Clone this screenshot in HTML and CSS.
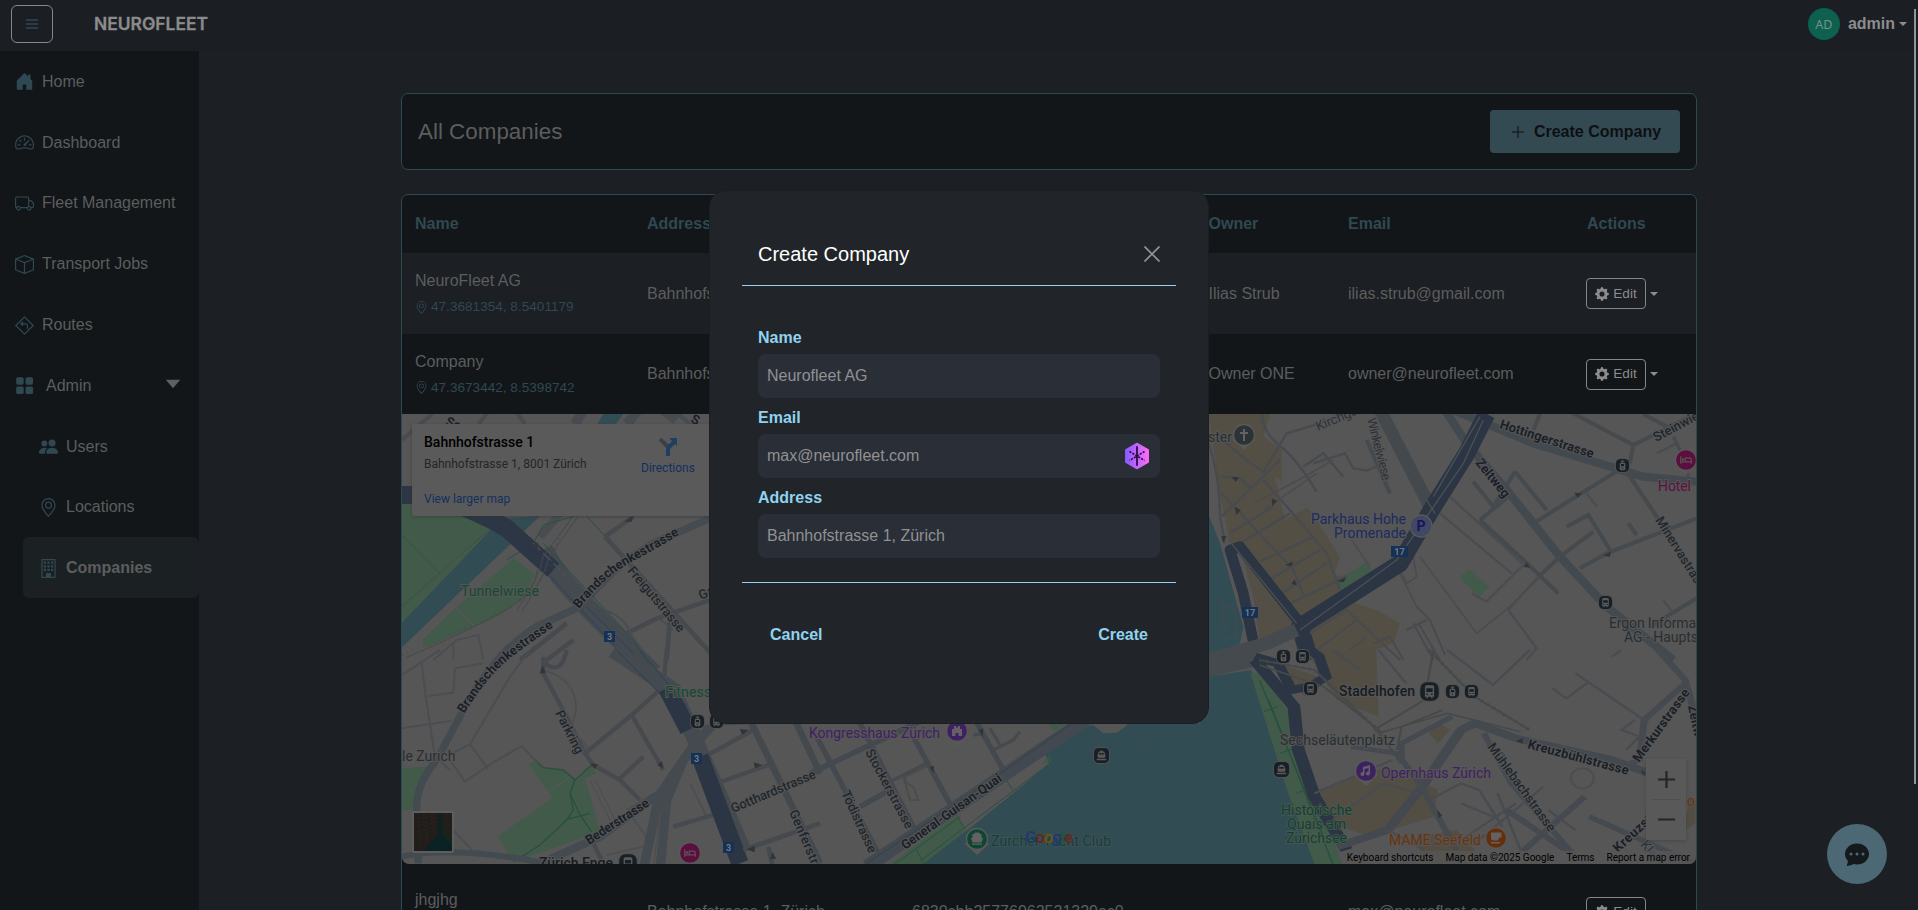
FILE: index.html
```html
<!DOCTYPE html>
<html lang="en">
<head>
<meta charset="utf-8">
<title>Neurofleet – Companies</title>
<link rel="stylesheet" href="styles.css">
</head>
<body>
<svg class="sprite" aria-hidden="true">
  <symbol id="geo" viewBox="0 0 16 16"><path d="M12.166 8.94c-.524 1.062-1.234 2.12-1.96 3.07A32 32 0 0 1 8 14.58a32 32 0 0 1-2.206-2.57c-.726-.95-1.436-2.008-1.96-3.07C3.304 7.867 3 6.862 3 6a5 5 0 0 1 10 0c0 .862-.305 1.867-.834 2.94M8 16s6-5.686 6-10A6 6 0 0 0 2 6c0 4.314 6 10 6 10"/><path d="M8 8a2 2 0 1 1 0-4 2 2 0 0 1 0 4m0 1a3 3 0 1 0 0-6 3 3 0 0 0 0 6"/></symbol>
  <symbol id="gear" viewBox="0 0 16 16"><path d="M9.405 1.05c-.413-1.4-2.397-1.4-2.81 0l-.1.34a1.464 1.464 0 0 1-2.105.872l-.31-.17c-1.283-.698-2.686.705-1.987 1.987l.169.311c.446.82.023 1.841-.872 2.105l-.34.1c-1.4.413-1.4 2.397 0 2.81l.34.1a1.464 1.464 0 0 1 .872 2.105l-.17.31c-.698 1.283.705 2.686 1.987 1.987l.311-.169a1.464 1.464 0 0 1 2.105.872l.1.34c.413 1.4 2.397 1.4 2.81 0l.1-.34a1.464 1.464 0 0 1 2.105-.872l.31.17c1.283.698 2.686-.705 1.987-1.987l-.169-.311a1.464 1.464 0 0 1 .872-2.105l.34-.1c1.4-.413 1.4-2.397 0-2.81l-.34-.1a1.464 1.464 0 0 1-.872-2.105l.17-.31c.698-1.283-.705-2.686-1.987-1.987l-.311.169a1.464 1.464 0 0 1-2.105-.872zM8 10.93a2.929 2.929 0 1 1 0-5.86 2.929 2.929 0 0 1 0 5.858z"/></symbol>
  <symbol id="tram" viewBox="0 0 16 16"><rect width="16" height="16" rx="6" fill="#4f5254"/><rect x="1" y="1" width="14" height="14" rx="5" fill="#182026"/><path d="M6 3.2h4M8 3.2v2" stroke="#595959" stroke-width="1.2"/><rect x="5" y="5" width="6" height="8" rx="1.3" fill="#595959"/><path d="M6.3 6.5h3.4v2.4H6.3zM7.3 10.3h1.4v1.2H7.3z" fill="#182026"/></symbol>
  <symbol id="bus" viewBox="0 0 16 16"><rect width="16" height="16" rx="6" fill="#4f5254"/><rect x="1" y="1" width="14" height="14" rx="5" fill="#182026"/><path d="M4.5 4.5q0-1.2 1.2-1.2h4.6q1.2 0 1.2 1.2V12h-1.2v1.1H9.2V12H6.8v1.1H5.7V12H4.5z" fill="#595959"/><path d="M5.6 5.5h4.8v2.8H5.6zM5.6 9.6h1.2v1H5.6zM9.2 9.6h1.2v1H9.2z" fill="#182026"/></symbol>
  <symbol id="ship" viewBox="0 0 18 18"><rect width="18" height="18" rx="6" fill="#4f5254"/><rect x="1" y="1" width="16" height="16" rx="5" fill="#182026"/><path d="M7 4h4v1.5h1.5V8l1 .5-1 3h-7l-1-3 1-.5V5.5H7zM4 12.5h10V14H4z" fill="#595959"/><path d="M6.5 6.5h5V8h-5z" fill="#182026"/></symbol>
  <symbol id="bed" viewBox="0 0 16 12"><path d="M1 1v10M1 8.5h14M15 11V5.5q0-2-2-2H7v5" fill="none" stroke="#5f5258" stroke-width="1.6"/><circle cx="4" cy="5.3" r="1.7" fill="#5f5258"/></symbol>
</svg>

<header class="topbar">
  <button class="burger" aria-label="Menu"><svg width="12" height="10" viewBox="0 0 12 10"><path d="M0 1h12M0 5h12M0 9h12" stroke="#2f4853" stroke-width="1.7"/></svg></button>
  <svg class="logo" width="116" height="20" viewBox="0 0 116 20"><text x="0" y="16" textLength="114" lengthAdjust="spacingAndGlyphs">NEUROFLEET</text><circle cx="56.5" cy="10" r="1.3" fill="#8b8c8d"/></svg>
  <div class="account"><span class="avatar">AD</span><b>admin</b><i class="caret"></i></div>
</header>

<div class="shell">
  <nav class="sidebar">
    <a><svg class="ic" viewBox="0 0 16 16"><path d="M6.5 14.5v-3.505c0-.245.25-.495.5-.495h2c.25 0 .5.25.5.5v3.5a.5.5 0 0 0 .5.5h4a.5.5 0 0 0 .5-.5v-7a.5.5 0 0 0-.146-.354L13 5.793V2.5a.5.5 0 0 0-.5-.5h-1a.5.5 0 0 0-.5.5v1.293L8.354 1.146a.5.5 0 0 0-.708 0l-6 6A.5.5 0 0 0 1.5 7.5v7a.5.5 0 0 0 .5.5h4a.5.5 0 0 0 .5-.5"/></svg>Home</a>
    <a><svg class="ic" viewBox="0 0 16 16"><path d="M8 4a.5.5 0 0 1 .5.5V6a.5.5 0 0 1-1 0V4.5A.5.5 0 0 1 8 4M3.732 5.732a.5.5 0 0 1 .707 0l.915.914a.5.5 0 1 1-.708.708l-.914-.915a.5.5 0 0 1 0-.707M2 10a.5.5 0 0 1 .5-.5h1.586a.5.5 0 0 1 0 1H2.5A.5.5 0 0 1 2 10m9.5 0a.5.5 0 0 1 .5-.5h1.5a.5.5 0 0 1 0 1H12a.5.5 0 0 1-.5-.5m.754-4.246a.39.39 0 0 0-.527-.02L7.547 9.31a.91.91 0 1 0 1.302 1.258l3.434-4.297a.39.39 0 0 0-.029-.518z"/><path fill-rule="evenodd" d="M0 10a8 8 0 1 1 15.547 2.661c-.442 1.253-1.845 1.602-2.932 1.25C11.309 13.488 9.475 13 8 13c-1.474 0-3.31.488-4.615.911-1.087.352-2.49.003-2.932-1.25A8 8 0 0 1 0 10m8-7a7 7 0 0 0-6.603 9.329c.203.575.923.876 1.68.63C4.397 12.533 6.358 12 8 12s3.604.532 4.923.96c.757.245 1.477-.056 1.68-.631A7 7 0 0 0 8 3"/></svg>Dashboard</a>
    <a><svg class="ic" viewBox="0 0 16 16"><path d="M0 3.5A1.5 1.5 0 0 1 1.5 2h9A1.5 1.5 0 0 1 12 3.5V5h1.02a1.5 1.5 0 0 1 1.17.563l1.481 1.85a1.5 1.5 0 0 1 .329.938V10.5a1.5 1.5 0 0 1-1.5 1.5H14a2 2 0 1 1-4 0H5a2 2 0 1 1-3.998-.085A1.5 1.5 0 0 1 0 10.5zm1.294 7.456A2 2 0 0 1 4.732 11h5.536a2 2 0 0 1 .732-.732V3.5a.5.5 0 0 0-.5-.5h-9a.5.5 0 0 0-.5.5v7a.5.5 0 0 0 .294.456M12 10a2 2 0 0 1 1.732 1h.768a.5.5 0 0 0 .5-.5V8.35a.5.5 0 0 0-.11-.312l-1.48-1.85A.5.5 0 0 0 13.02 6H12zm-9 1a1 1 0 1 0 0 2 1 1 0 0 0 0-2m9 0a1 1 0 1 0 0 2 1 1 0 0 0 0-2"/></svg>Fleet Management</a>
    <a><svg class="ic" viewBox="0 0 16 16"><path d="M8.186 1.113a.5.5 0 0 0-.372 0L1.846 3.5 8 5.961 14.154 3.5zM15 4.239l-6.5 2.6v7.922l6.5-2.6V4.24zM7.5 14.762V6.838L1 4.239v7.923zM7.443.184a1.5 1.5 0 0 1 1.114 0l7.129 2.852A.5.5 0 0 1 16 3.5v8.662a1 1 0 0 1-.629.928l-7.185 2.874a.5.5 0 0 1-.372 0L.63 13.09a1 1 0 0 1-.63-.928V3.5a.5.5 0 0 1 .314-.464z"/></svg>Transport Jobs</a>
    <a><svg class="ic" viewBox="0 0 16 16"><path d="M8 .7 15.3 8 8 15.3.7 8z" fill="none" stroke="currentColor" stroke-linejoin="round"/><path d="M5.5 6.6h3.3q1.7 0 1.7 1.7V11" fill="none" stroke="currentColor"/><path d="M6.7 4.3v4.6L4.2 6.6z"/></svg>Routes</a>
    <a class="parent"><svg class="ic" viewBox="0 0 16 16"><rect x="1" y="1" width="6.3" height="6.3" rx="1.4"/><rect x="8.9" y="1" width="6.3" height="6.3" rx="1.4"/><rect x="1" y="8.9" width="6.3" height="6.3" rx="1.4"/><rect x="8.9" y="8.9" width="6.3" height="6.3" rx="1.4"/></svg>Admin<svg class="chev" width="16" height="10" viewBox="0 0 16 10"><path d="M.8.8h14.4L8 9.2z"/></svg></a>
    <a class="sub"><svg class="ic" viewBox="0 0 16 16"><path d="M7 14s-1 0-1-1 1-4 5-4 5 3 5 4-1 1-1 1zm4-6a3 3 0 1 0 0-6 3 3 0 0 0 0 6m-5.784 6A2.24 2.24 0 0 1 5 13c0-1.355.68-2.75 1.936-3.72A6.3 6.3 0 0 0 5 9c-4 0-5 3-5 4s1 1 1 1zM4.5 8a2.5 2.5 0 1 0 0-5 2.5 2.5 0 0 0 0 5"/></svg>Users</a>
    <a class="sub"><svg class="ic"><use href="#geo"/></svg>Locations</a>
    <a class="sub active"><svg class="ic" viewBox="0 0 16 16"><path fill-rule="evenodd" d="M2.5 0h11q.5 0 .5.5v15q0 .5-.5.5h-11q-.5 0-.5-.5V.5q0-.5.5-.5M3 1v14h3v-2.5q0-.5.5-.5h3q.5 0 .5.5V15h3V1z"/><path d="M4 2.200h1.900v1.900H4zM7.050 2.200h1.900v1.900h-1.900zM10.100 2.200H12v1.900h-1.900zM4 5.200h1.900v1.900H4zM7.050 5.200h1.900v1.900h-1.900zM10.100 5.200H12v1.900h-1.900zM4 8.200h1.900v1.900H4zM7.050 8.200h1.900v1.900h-1.900zM10.100 8.200H12v1.900h-1.900zM6 12h4v3H6z"/></svg>Companies</a>
  </nav>

  <main class="content">
    <section class="card titlebar">
      <h1>All Companies</h1>
      <button class="primary"><svg width="12" height="12" viewBox="0 0 12 12"><path d="M6 0v12M0 6h12" stroke="currentColor" stroke-width="1"/></svg>Create Company</button>
    </section>
    <section class="card list">
      <div class="row head"><span>Name</span><span>Address</span><span>ID</span><span>Owner</span><span>Email</span><span>Actions</span></div>
      <div class="row alt">
        <div>NeuroFleet AG<small><svg><use href="#geo"/></svg>47.3681354, 8.5401179</small></div><span>Bahnhofstrasse 1, Zürich</span><span></span><span>Ilias Strub</span><span>ilias.strub@gmail.com</span>
        <div class="actions"><button><svg><use href="#gear"/></svg>Edit</button><i class="caret"></i></div>
      </div>
      <div class="row">
        <div>Company<small><svg><use href="#geo"/></svg>47.3673442, 8.5398742</small></div><span>Bahnhofstrasse 1, Zürich</span><span></span><span>Owner ONE</span><span>owner@neurofleet.com</span>
        <div class="actions"><button><svg><use href="#gear"/></svg>Edit</button><i class="caret"></i></div>
      </div>
      <div class="mapbox">
      <svg class="map" width="1294" height="450" viewBox="402 414 1294 450">
        <defs>
          <path id="brand1" d="M579 609Q604 577 630 563T683 532"/>
          <path id="brand2" d="M464 714Q484 682 500 667T552 628"/>
        </defs>
        <rect x="402" y="414" width="1294" height="450" fill="#565656"/>
        <!-- north-west quarter -->
        <g transform="translate(400 410) scale(.33333)" fill="none">
          <path d="M6 280 200 318 285 342 6 638z" fill="#425a49"/>
          <path d="M6 375 118 490M118 490 6 590M118 490 285 345" stroke="#2f5143" stroke-width="2"/>
          <path d="M6 638 305 325 420 318 6 712zM592 42 610 12h60l-22 30z" fill="#324c53"/>
          <path d="M68 690 170 590 342 444 405 495 370 560Q300 625 220 650L75 712z" fill="#425a49"/>
          <path d="M168 592l55 55" stroke="#565656" stroke-width="5"/>
          <path d="M6 90 110 0M235 42l35-42M345 0l30 42M820 0l60 50" stroke="#484c50" stroke-width="12"/>
          <path d="M525 42 550 0M680 42 715 0M790 0l40 30" stroke="#484c50" stroke-width="30"/>
          <path d="M300 740Q380 660 430 640L540 590Q620 500 680 450L760 400 930 325" stroke="#444b51" stroke-width="22"/>
          <path d="M420 380 490 300" stroke="#484d51" stroke-width="24"/>
          <path d="M430 420 480 500 560 590 760 790" stroke="#444a50" stroke-width="58"/>
          <path d="M400 445 600 660 770 840M560 590 690 720 780 830" stroke="#29405a" stroke-width="3"/>
          <path d="M430 400 700 690 800 850M320 450 400 400 430 345 520 320M560 318 620 385" stroke="#27503d" stroke-width="3"/>
          <path d="M6 255h80Q230 300 320 355L460 480" stroke="#2c3644" stroke-width="54"/>
          <path d="m400 400 100 100" stroke="#4b5157" stroke-width="4" stroke-dasharray="30 12"/>
          <path d="M350 600Q420 500 430 440L520 318M365 606Q435 500 445 445L535 318M20 742Q190 670 300 610T410 480" stroke="#44484b" stroke-width="3"/>
          <path d="M6 735Q190 665 315 600T480 370" stroke="#48494a" stroke-width="7" stroke-dasharray="2 15"/>
          <path d="M615 380 700 320M615 380 960 760M680 670 770 625 960 560M810 625 800 750M500 640 360 750M440 750 520 690" stroke="#464a4e" stroke-width="14"/>
          <path d="M100 750 170 690 235 675 250 750M600 595Q680 620 690 670L750 750M160 700v50M770 620 820 660" stroke="#494c51" stroke-width="5"/>
          <path d="m672 335 28-18-5 18zM400 405l14-8-2 20z" fill="#33373b"/>
        </g>
        <!-- south-west quarter -->
        <g transform="translate(400 650) scale(.33333)" fill="none">
          <path d="M6 355 90 350 40 480H6zM293 560 458 443 386 343 408 330 430 352 490 360 530 390 570 345 590 370 555 385 600 545 340 636z" fill="#425a49"/>
          <path d="M340 636 420 585 500 510 520 480 510 430 525 390 490 360 430 353 405 330M525 390 575 345M510 430 540 495 575 545M500 508 570 490" stroke="#27503d" stroke-width="4"/>
          <path d="m440 430 70-50" stroke="#55595a" stroke-width="3"/>
          <path d="M330 -10Q250 70 190 180L110 330Q50 400 50 470L55 640" stroke="#444b50" stroke-width="22"/>
          <path d="M6 620Q90 600 220 610T430 640" stroke="#444b50" stroke-width="18"/>
          <path d="M6 235 155 212M85 138 160 128 165 55 250 40M155 310 210 283 265 358M210 283 330 80 390 0M65 40 80 160 105 320 150 360M6 75 120 0M150 330 195 395 275 340 365 288 415 340M150 530 220 605" stroke="#4a4d51" stroke-width="6"/>
          <path d="M430 20V70L500 200 555 310 580 345 660 390 720 450M555 310 695 195 790 110 800 0M500 0Q490 50 465 52T435 30M695 195 790 360M660 385 730 320M915 320 1060 240M950 400 1105 345M570 560 605 630M820 530 990 480" stroke="#464a4f" stroke-width="13"/>
          <path d="M430 60Q500 80 520 130T510 230L570 300M680 480 760 430M695 500 740 560M620 615 730 590M870 400 920 500" stroke="#4b4d50" stroke-width="5"/>
          <path d="m640 0 180 120L1030 600" stroke="#454a50" stroke-width="48"/>
          <path d="M650 0 790 140M720 0 860 170" stroke="#2b3f55" stroke-width="3"/>
          <path d="M800 115 865 240M900 320 1020 640" stroke="#2c3544" stroke-width="52"/>
          <path d="M400 650 600 560 780 430 870 300 950 215 1060 210" stroke="#434a50" stroke-width="24"/>
          <path d="M930 230Q790 400 770 470L730 660M850 330 800 450 780 660" stroke="#444a50" stroke-width="28"/>
          <path d="M930 230Q790 390 780 480L760 660M570 390l60 120M585 390l60 120" stroke="#4a4b4c" stroke-width="3"/>
          <path d="M1045 200 1260 640M1180 200 1260 370" stroke="#44494e" stroke-width="20"/>
          <path d="M1030 600 1260 520M1120 660l-15-70" stroke="#464a4e" stroke-width="14"/>
          <path d="m428 46-9 24h18zM570 340l24 3-10 14zM790 355l-4-22-14 12zM1045 240l-26-3 8 18zM1087 345l-26-8 4 18zM1040 598l24-11v20zM1118 605l-8 22h18z" fill="#303539"/>
        </g>
        <!-- lakefront -->
        <g transform="translate(810 700) scale(.33333)" fill="none">
          <path d="M330 492 480 385 720 190 700 150 760 100 850 75 880 100 920 98 960 70H1400V492z" fill="#324c53"/>
          <path d="M240 492 440 345 470 390 340 492zM700 190l15-25 10 22zM715 72l20 20 30-20z" fill="#425a49"/>
          <path d="M255 492 450 350M335 480 720 190 702 145M585 235l24 36M440 345l20 35M320 450l20 40" stroke="#27503d" stroke-width="3"/>
          <path d="M0 220 340 60M20 110 215 480M150 70 320 400M310 110 430 330M490 50 580 210M150 320 240 270" stroke="#43494e" stroke-width="16"/>
          <path d="M170 500 500 280 900 10" stroke="#424950" stroke-width="40"/>
          <path d="M170 490 500 270 800 60" stroke="#33393f" stroke-width="2"/>
          <path d="M240 245 350 190M540 85l30 50M550 150 610 120 630 95M490 105 520 100" stroke="#464a4f" stroke-width="10"/>
          <path d="M280 230 300 300 325 300 310 260 290 250 285 230 360 195" stroke="#4b4b4c" stroke-width="5"/>
          <path d="m850 100 55 120M950 70l53 93M1030 65l38 38" stroke="#454a4d" stroke-width="3"/>
          <path d="m372 220-14-18 14-5zM518 112l-12-22 14-4z" fill="#303539"/>
        </g>
        <!-- old town and Hottingen -->
        <g transform="translate(1200 410) scale(.33333)" fill="none">
          <path d="M26 12H210L190 80 245 120V240L330 300 420 440 400 500 540 480 430 570 530 600 600 640 580 700 450 750H300L250 560 90 400 60 250z" fill="#544f44"/>
          <path d="m225 200 50 30 50 60-70 40z" fill="#565656"/>
          <path d="M120 410 260 600 285 660 180 700 160 560z" fill="#544f46"/>
          <path d="M20 300 60 400 130 650 120 700 20 750z" fill="#324c53"/>
          <path d="M40 568h22l10 22h28M62 605l20 60M62 605l42-8 8 85-38 8" stroke="#454a4d" stroke-width="3"/>
          <path d="m410 515 90-60 20 35-100 55zM808 477l59 55-30 29-58-60z" fill="#425a49"/>
          <path d="M26 100Q60 200 60 320L75 400M60 80Q120 140 190 185L260 70 360 40 450 0M185 12Q190 70 240 108T350 245M65 200 120 205 155 235M65 320 240 150M65 250 280 480 310 555M190 210 270 300 380 430 420 540M90 370 220 290M120 400 270 310M180 455 340 380M215 505 360 420M245 550 380 460M270 580 440 500M310 170 370 130 430 200M340 160 435 130 460 175 500 182 540 165" stroke="#474a4f" stroke-width="7"/>
          <path d="M160 280Q300 210 400 150M190 300 350 190M455 390 510 470M595 480 650 590M660 440 830 670 930 590 1100 420M640 440 600 480 620 520 650 500z" stroke="#4c4c4e" stroke-width="5"/>
          <path d="M540 0 700 310" stroke="#43494d" stroke-width="38"/>
          <path d="M735 0 800 100 920 240 1080 440 1220 590 1420 750M760 0 1000 100 1330 200 1490 215" stroke="#434a4f" stroke-width="25"/>
          <path d="M500 90 570 250M820 215 880 290 945 185M945 185 1040 300M1000 340 1240 190 1270 170M840 330 925 260M840 330 960 440 1075 550M1015 500 1080 440 1180 365M1100 350 1165 315 1230 420M1140 475 1220 430 1490 325M1270 170 1370 320 1490 500M1100 0 1300 105 1490 10M1300 105 1290 160M1285 340 1310 375M1000 60 1020 12M1330 12 1420 60M1350 650 1490 565" stroke="#454a4e" stroke-width="12"/>
          <path d="M750 260 935 430 970 465 860 575 815 550M720 310 935 490M925 600 1010 715 980 750M925 600 1015 500M1160 250 1190 290M1390 570 1420 610M1370 130 1430 100" stroke="#494c50" stroke-width="7"/>
          <path d="m1420 80 30 60 15 60" stroke="#474a4e" stroke-width="10"/>
          <path d="M860 12 800 130 700 290 600 460 490 530 300 650 330 750" stroke="#2c3543" stroke-width="52" stroke-linejoin="round"/>
          <path d="M300 640 120 410 90 420 130 550 165 720" stroke="#2c3543" stroke-width="32" stroke-linejoin="round"/>
          <path d="M850 30 790 160 680 320 590 450 480 530 300 660M70 370 290 640M840 20 700 260M680 270l25 40" stroke="#4a5055" stroke-width="4"/>
          <path d="M330 670 440 600 600 750M350 720 470 630M450 720 500 680M520 700 570 680 610 750M650 590 690 630 735 735M620 660 680 630M640 640 700 750M655 640 720 750" stroke="#484a4e" stroke-width="6"/>
          <path d="M20 750 200 700 290 660" stroke="#444a4e" stroke-width="40"/>
          <path d="m95 200 22 2-10 14zM215 265l16 8-14 16zM105 292l18 8-15 15zM255 466l24-12-4 14zM290 526l-16-4 10-14zM412 514l25-12-5 15zM70 400l-6-22h14zM155 455l18 8-10 15zM1145 250l-22-2 10 15zM990 473l-20-2 10-14zM1210 437l22-12-2 15z" fill="#303539"/>
        </g>
        <!-- Stadelhofen and Seefeld -->
        <g transform="translate(1200 650) scale(.45788 .33333)" fill="none">
          <path d="M0 85 110 60 140 110 180 250 260 560 280 642H0z" fill="#324c53"/>
          <path d="M230 0H385L390 200 300 150zM170 40 280 90 230 140zM500 250 520 215 545 240 520 280zM240 430 330 380 410 350 520 420 510 500 370 560 290 520zM480 560 560 540 600 600 540 640H480zM1070 450h12V520l-30 30z" fill="#534e44"/>
          <path d="M110 70 135 70 190 180 270 480 310 642H250L190 420z" fill="#425a49"/>
          <path d="M140 185 170 170M175 310 215 290M210 430 250 410M150 150 290 642M130 90 270 560M235 540 280 520" stroke="#27503d" stroke-width="3"/>
          <path d="M0 60 130 20" stroke="#444a4e" stroke-width="52"/>
          <path d="M120 20 170 40 200 120 240 110 275 80 260 20 240 0" stroke="#2c3543" stroke-width="24"/>
          <path d="M120 30 205 170 215 300 250 440 320 600" stroke="#2c3543" stroke-width="28"/>
          <path d="M130 30 250 60 380 230 440 340M130 45 270 110 400 250M380 240 490 150 510 0M390 250 540 190 700 245M500 0 600 140 720 240M430 300 440 230 530 180" stroke="#46484a" stroke-width="5"/>
          <path d="M130 30 250 60 380 230 440 340M500 0 600 140 720 240" stroke="#46484a" stroke-width="12" stroke-dasharray="2 14"/>
          <path d="M300 590 410 540 480 420 570 240 600 220 690 265 900 330 980 370" stroke="#43494f" stroke-width="22"/>
          <path d="M330 290 430 310 480 400 560 600M620 250 680 400 820 620M440 340 440 280 550 200" stroke="#454a50" stroke-width="14"/>
          <path d="M1000 0 1060 90 1082 200M1060 100 970 210 960 330 940 340M850 500 1082 642M670 480 820 620M700 610 840 440" stroke="#444a4f" stroke-width="15"/>
          <path d="M290 0 350 60M390 0 450 100M540 0 640 105 720 0M820 70 980 220M770 115 800 145 850 95M930 300 960 260 920 240 950 210M500 450 570 400 610 420 660 530M560 580 690 460M410 540 490 600M570 460 640 500M600 580 750 410M900 20 920 0M250 430 420 330M290 510 400 400 480 430M650 430 700 600M760 480 820 540" stroke="#484b50" stroke-width="6"/>
          <ellipse cx="835" cy="385" rx="25" ry="30" stroke="#4d4d4d" stroke-width="5"/>
          <path d="m690 273 15-9v18zM518 480l3 24 8-8zM213 172l-5 20h10zM970 378l-8-17 10 4z" fill="#303539"/>
        </g>

        <g class="street">
          <text transform="translate(445 425) rotate(20)">Sc</text><text transform="translate(690 422) rotate(25)">S</text>
          <text><textPath href="#brand1">Brandschenkestrasse</textPath></text>
          <text><textPath href="#brand2">Brandschenkestrasse</textPath></text>
          <text class="md" transform="translate(627 571) rotate(50)" textLength="81">Freigutstrasse</text>
          <text class="md" transform="translate(701 600) rotate(-25)">Ga</text>
          <text class="md" transform="translate(555 713) rotate(63)" textLength="47">Parkring</text>
          <text transform="translate(589 845) rotate(-33)" textLength="73">Bederstrasse</text>
          <text class="md" transform="translate(733 813) rotate(-23)" textLength="91">Gotthardstrasse</text>
          <text class="md" transform="translate(789 812) rotate(67)" textLength="86">Genferstrasse</text>
          <text class="md" transform="translate(865 752) rotate(62)" textLength="88">Stockerstrasse</text>
          <text class="md" transform="translate(841 793) rotate(65)" textLength="67">Tödistrasse</text>
          <text transform="translate(905 850) rotate(-35.5)" textLength="120">General-Guisan-Quai</text>
          <text class="md gr" transform="translate(1318 431) rotate(-23)">Kirchgasse</text>
          <text class="md gr" transform="translate(1367 419) rotate(76)" textLength="64">Winkelwiese</text>
          <text transform="translate(1499 428) rotate(18)" textLength="98">Hottingerstrasse</text>
          <text transform="translate(1475 463) rotate(51)" textLength="46">Zeltweg</text>
          <text class="md" transform="translate(1656 442) rotate(-28)">Steinwiesstr</text>
          <text class="md" transform="translate(1655 520) rotate(58)" textLength="76">Minervastras</text>
          <text transform="translate(1527 748) rotate(15)" textLength="104">Kreuzbühlstrasse</text>
          <text class="md" transform="translate(1487 747) rotate(54)" textLength="106">Mühlebachstrasse</text>
          <text transform="translate(1639 763) rotate(-54)" textLength="87">Merkurstrasse</text>
          <text transform="translate(1618 853) rotate(-43)" textLength="48">Kreuzst</text>
          <text class="md gr" transform="translate(1640 845) rotate(50)">Klei</text>
          <text transform="translate(1688 706) rotate(78)">Zeltw</text>
        </g>
        <g class="poi">
          <text class="green" x="461" y="596" textLength="78">Tunnelwiese</text>
          <text class="green" x="665" y="697" textLength="46">Fitness</text>
          <text x="402" y="761">le Zurich</text>
          <text class="dark" x="539" y="868" textLength="74">Zürich Enge</text>
          <text class="purple" x="809" y="738" textLength="131">Kongresshaus Zürich</text>
          <text class="green lake" x="991" y="846" textLength="120">Zürcher Yacht Club</text>
          <text x="1208" y="442">ster</text>
          <text class="blue" x="1311" y="524" textLength="95">Parkhaus Hohe</text><text class="blue" x="1334" y="538" textLength="72">Promenade</text>
          <text class="pink" x="1658" y="491" textLength="33">Hotel</text>
          <text x="1609" y="628" textLength="87">Ergon Informa</text><text x="1624" y="642" textLength="74">AG - Haupts</text>
          <text class="dark" x="1339" y="696" textLength="76">Stadelhofen</text>
          <text x="1280" y="745" textLength="115">Sechseläutenplatz</text>
          <text class="purple" x="1381" y="778" textLength="110">Opernhaus Zürich</text>
          <text class="green quay" x="1281" y="815" textLength="71">Historische</text><text class="green quay" x="1287" y="829" textLength="59">Quais am</text><text class="green quay" x="1286" y="843" textLength="61">Zürichsee</text>
          <text class="orange" x="1389" y="845" textLength="92">MAME Seefeld</text><text class="orange" x="1687" y="806">o</text>
        </g>
        <g class="shield">
          <rect x="604" y="631" width="11" height="11"/><text x="609.5" y="640">3</text>
          <rect x="691" y="753" width="11" height="11"/><text x="696.5" y="762">3</text>
          <rect x="723" y="842" width="11" height="11"/><text x="728.5" y="851">3</text>
          <rect x="1391" y="546" width="17" height="11"/><text x="1399.5" y="555">17</text>
          <rect x="1242" y="607" width="16" height="11"/><text x="1250" y="616">17</text>
        </g>
        <use href="#tram" x="690" y="714" width="15" height="15"/><use href="#bus" x="709" y="714" width="15" height="15"/>
        <use href="#bus" x="618" y="853" width="20" height="20"/>
        <use href="#tram" x="1276" y="649" width="15" height="15"/><use href="#bus" x="1295" y="649" width="15" height="15"/>
        <use href="#bus" x="1303" y="681" width="15" height="15"/><use href="#bus" x="1419" y="681" width="21" height="21"/>
        <use href="#tram" x="1445" y="684" width="15" height="15"/><use href="#bus" x="1464" y="684" width="15" height="15"/>
        <use href="#tram" x="1615" y="458" width="15" height="15"/><use href="#bus" x="1598" y="595" width="15" height="15"/>
        <use href="#ship" x="1093" y="747" width="17" height="17"/><use href="#ship" x="1273" y="761" width="17" height="17"/>
        <g stroke="#595959" stroke-width="1.3">
          <path fill="#595959" d="M946 736 957 746 968 736zM966 844l11 10 11-10zM1234 440l10 9 10-9zM1355 775l11 10 11-10zM1486 842l10 10 10-10zM1676 465l10 9 10-9z"/>
          <circle cx="957" cy="731" r="10.5" fill="#3d2160"/><circle cx="977" cy="839" r="10.5" fill="#0d4730"/><circle cx="1244" cy="435" r="10.5" fill="#2b3337"/>
          <circle cx="1366" cy="771" r="10.5" fill="#3d2160"/><circle cx="1496" cy="838" r="10.5" fill="#653009"/><circle cx="1686" cy="460" r="10.5" fill="#5b0f3e"/><circle cx="690" cy="853" r="10.5" fill="#5b0f3e"/>
          <circle cx="1421" cy="526" r="11" fill="#404866"/>
        </g>
        <g fill="#656065"><path d="M952 736v-7h2v-3h2v1.500h2V726h2v3h2v7h-3.500v-3h-3v3zM972.500 834h2v-1.500h5v1.500h2v3.500l1.500.5-1.500 4.500h-9l-1.500-4.500 1.500-.5zM972 843.500h10v1.300h-10zM1243 429h2v3h3v2h-3v7h-2v-7h-3v-2h3zM1363 767l7-2v8.500a2 2 0 1 1-1.500-2v-3.500l-4 1v5a2 2 0 1 1-1.500-2zM1491 832.500h10.500v5h-2.500q0 3-2.500 3h-3q-2.500 0-2.500-3zM1491 842h9v1.500h-9z"/></g>
        <use href="#bed" x="684" y="848.5" width="12" height="9"/><use href="#bed" x="1680" y="455.5" width="12" height="9"/>
        <text class="park" x="1421" y="531">P</text>
        <text class="google" x="1025" y="843" textLength="48"><tspan fill="#203a70">G</tspan><tspan fill="#6a2520">o</tspan><tspan fill="#6b5411">o</tspan><tspan fill="#203a70">g</tspan><tspan fill="#1b5a32">l</tspan><tspan fill="#6a2520">e</tspan></text>
      </svg>
      <div class="place">
        <strong>Bahnhofstrasse 1</strong><span>Bahnhofstrasse 1, 8001 Zürich</span><a>View larger map</a>
        <div class="directions"><svg width="18" height="18" viewBox="0 0 18 18"><path d="m1 1 8 8" stroke="#3b4048" stroke-width="4"/><path d="M9 18v-6q0-2 1.500-3.500L15 4" fill="none" stroke="#203d62" stroke-width="4"/><path d="M10 0h8v8z" fill="#203d62"/></svg><a>Directions</a></div>
      </div>
      <svg class="satellite" width="42" height="42" viewBox="0 0 42 42"><rect width="42" height="42" rx="2" fill="#5e5e5e"/><rect x="2" y="2" width="38" height="38" fill="#201d1a"/><path d="M2 8 26 5M2 15l24-4M2 22l22-6M2 30l16-8M6 2l3 34M13 2l2 30M20 2l2 22M35 2l-1 20" stroke="#2b2520" stroke-width="1.2" stroke-dasharray="2 2"/><path d="M27 2h3v20l4 6 6 7v5H13l4-7 9-8z" fill="#0b2225"/><path d="M40 25v10l-8-10-2-9z" fill="#15251b"/></svg>
      <div class="zoomctl"><svg width="17" height="17" viewBox="0 0 17 17"><path d="M8.5 0v17M0 8.5h17" stroke="#252525" stroke-width="2.2"/></svg><hr><svg width="17" height="17" viewBox="0 0 17 17"><path d="M0 8.5h17" stroke="#252525" stroke-width="2.2"/></svg></div>
      <div class="credits"><span>Keyboard shortcuts</span><span>Map data ©2025 Google</span><span>Terms</span><span>Report a map error</span></div>
      </div>
      <div class="row last">
        <div>jhgjhg<small><svg><use href="#geo"/></svg>47.3681354, 8.5401179</small></div><span>Bahnhofstrasse 1, Zürich</span><span>6830cbb25776962521329ec0</span><span></span><span>max@neurofleet.com</span>
        <div class="actions"><button><svg><use href="#gear"/></svg>Edit</button><i class="caret"></i></div>
      </div>
    </section>
  </main>
</div>

<div class="thumb"></div>
<button class="chat" aria-label="Chat"><svg width="24" height="24" viewBox="0 0 16 16"><path d="M16 8c0 3.866-3.582 7-8 7a9 9 0 0 1-2.347-.306c-.584.296-1.925.864-4.181 1.234-.2.032-.352-.176-.273-.362.354-.836.674-1.95.77-2.966C.744 11.37 0 9.76 0 8c0-3.866 3.582-7 8-7s8 3.134 8 7M5 8a1 1 0 1 0-2 0 1 1 0 0 0 2 0m4 0a1 1 0 1 0-2 0 1 1 0 0 0 2 0m3 1a1 1 0 1 0 0-2 1 1 0 0 0 0 2"/></svg></button>

<div class="modal" role="dialog">
  <div class="modal-head"><h2>Create Company</h2><svg width="16" height="16" viewBox="0 0 16 16"><path d="m.5.5 15 15M15.5.5l-15 15" stroke="#909294" stroke-width="1.7"/></svg></div>
  <form class="modal-body">
    <label>Name</label><div class="field">Neurofleet AG</div>
    <label>Email</label><div class="field">max@neurofleet.com
      <svg width="26" height="28" viewBox="0 0 26 28"><defs><linearGradient id="hex"><stop offset="0" stop-color="#8a5cff"/><stop offset="1" stop-color="#fb6bf5"/></linearGradient></defs><path d="M13 1.5 24.2 8v12L13 26.5 1.800 20V8z" fill="url(#hex)" stroke="url(#hex)" stroke-width="1.5" stroke-linejoin="round"/><path d="M13 5v18" stroke="#2a0b45" stroke-width="1.8" stroke-linecap="round"/><path d="m5.5 9.5 15 9M20.5 9.5l-15 9" stroke="#2a0b45" stroke-width="1.7" stroke-dasharray="2.2 1.2"/></svg></div>
    <label>Address</label><div class="field">Bahnhofstrasse 1, Zürich</div>
  </form>
  <div class="modal-foot"><b>Cancel</b><b>Create</b></div>
</div>
</body>
</html>
```
FILE: styles.css
```css
* { box-sizing: border-box; }
body { margin: 0; height: 910px; overflow: hidden; background: #1c1f24; color: #5c5d5e; font: 16px/24px "Liberation Sans", Arial, sans-serif; }
button { font: inherit; color: inherit; background: none; border: 0; padding: 0; }
.sprite { position: absolute; width: 0; height: 0; }
.caret { width: 0; height: 0; border: 4.5px solid transparent; border-top-color: currentColor; border-bottom: 0; }

.topbar { display: flex; align-items: center; height: 51px; padding: 0 11px 3px 11px; background: #1b1e22; }
.burger { display: grid; place-items: center; width: 42px; height: 38px; border: 1px solid #85878a; border-radius: 6px; }
.logo { margin-left: 41px; }
.logo text { font: 600 17px Inter, sans-serif; fill: #8b8c8d; stroke: #8b8c8d; stroke-width: .3; }
.account { display: flex; align-items: center; margin-left: auto; color: #8c8d8f; }
.avatar { display: grid; place-items: center; width: 32px; height: 32px; margin-right: 8px; border-radius: 50%; background: #0e604f; color: #79908b; font: 12.5px "Noto Sans", sans-serif; }
.account .caret { margin-left: 4px; }

.shell { display: flex; height: 859px; overflow: hidden; }
.sidebar { flex: 0 0 199px; background: #121618; }
.sidebar a { display: flex; align-items: center; gap: 8px; height: 60.8px; padding: 1px 0 0 15px; }
.ic { width: 19px; height: 19px; fill: #304852; color: #304852; }
.sidebar .parent { gap: 12px; }
.chev { margin: -3px 18px 0 auto; fill: #5f6061; }
.sidebar .sub { margin-left: 23px; padding-left: 16px; }
.sidebar .active { background: #1b2023; border-radius: 6px; font-weight: bold; }

.content { flex: 1; padding: 42px 221px 0 202px; }
.card { border: 1px solid #2f4853; border-radius: 7px; background: #121618; overflow: hidden; }
.titlebar { display: flex; align-items: center; justify-content: space-between; height: 77px; padding: 0 16px; }
h1 { margin: 0; font-size: 22.4px; font-weight: 400; }
.primary { display: flex; align-items: center; justify-content: center; gap: 10px; width: 190px; height: 43px; padding-left: 3px; border-radius: 4px; background: #334a53; color: #0d1012; font-weight: bold; }
.list { margin-top: 24px; }
.row { display: grid; grid-template-columns: 232px 265px 296.5px 139.5px 239px 122px; align-items: center; height: 80px; }
.row > * { padding-left: 13px; white-space: nowrap; }
.row small { display: flex; align-items: center; gap: 3px; margin-top: 2px; font-size: 13.6px; color: #304852; }
.row small svg { width: 13px; height: 13px; fill: currentColor; }
.head { height: 58px; font-weight: bold; color: #304852; }
.alt { height: 81px; background: #1c1f23; }
.last { height: 96px; background: #121618; }
.row > div:first-child { padding-top: 1px; }
.row > .actions { display: flex; align-items: center; padding-left: 12px; color: #8b8c8d; }
.actions button { display: flex; align-items: center; justify-content: center; gap: 4px; width: 60px; height: 31px; border: 1px solid #85868a; border-radius: 4px; font-size: 13.6px; }
.actions svg { width: 14px; height: 14px; fill: currentColor; }
.actions .caret { margin-left: 4px; }

.mapbox { position: relative; height: 450px; border-radius: 0 0 7px 7px; overflow: hidden; font-family: Roboto, sans-serif; }
.map { display: block; }
.map text { font-family: Roboto, sans-serif; paint-order: stroke; stroke: #565656; stroke-width: 2px; }
.street text { font-size: 13px; font-weight: 700; fill: #1a2028; }
.street .md { font-weight: 500; fill: #20262d; }
.street .gr { font-weight: 400; fill: #2c3238; }
.poi text { font-size: 14px; fill: #292e32; }
.poi .dark { font-weight: 500; fill: #171c21; }
.poi .green { fill: #124a32; }
.map .poi .lake { fill: #173c36; stroke: #405459; stroke-width: 1.5px; }
.map .poi .quay { fill: #123f2d; stroke: #4d5a54; stroke-width: 1.5px; }
.poi .purple { fill: #402063; }
.poi .blue { fill: #1c2b60; }
.poi .pink { fill: #5b0f3e; }
.poi .orange { fill: #6a330b; }
.shield rect { fill: #143157; }
.map .shield text { font-size: 9px; font-weight: 700; fill: #777; stroke: none; text-anchor: middle; }
.map .park { font-size: 14px; font-weight: 700; fill: #171659; stroke: none; text-anchor: middle; }
.map .google { font-size: 17px; font-weight: 500; stroke: none; }
.place { position: absolute; left: 10px; top: 10px; width: 310px; height: 92px; padding: 9px 12px; display: flex; flex-direction: column; background: #5a5a5a; border-radius: 2px; box-shadow: 0 1px 3px #3338; font-size: 12px; line-height: 20px; color: #252525; }
.place strong { font-size: 14px; font-weight: 500; line-height: 19px; color: #000; }
.place span { margin-top: 2px; }
.place a { color: #123060; }
.place > a { margin-top: 15px; }
.directions { position: absolute; left: 229px; top: 14px; display: grid; justify-items: center; gap: 2px; }
.satellite { position: absolute; left: 10px; top: 397px; }
.zoomctl { position: absolute; left: 1244px; top: 345px; width: 40px; height: 81px; padding: 12px 0; display: flex; flex-direction: column; align-items: center; justify-content: space-between; background: #595959; box-shadow: 0 1px 3px #3337; }
.zoomctl hr { width: 30px; margin: 0; border: 0; border-top: 1px solid #505050; }
.credits { position: absolute; right: 0; bottom: 0; display: flex; gap: 12px; padding: 0 6px 0 2px; background: #565656c0; color: #000; font-size: 10px; line-height: 13px; }

.thumb { position: absolute; left: 1914px; top: 9px; width: 2px; height: 775px; background: #929396; }
.chat { position: absolute; left: 1827px; top: 824px; display: grid; place-items: center; width: 60px; height: 60px; border-radius: 50%; background: #4b6874; }
.chat svg { fill: #16191c; }

.modal { position: absolute; left: 709px; top: 190px; width: 500px; height: 534px; padding: 33px 32px; border: 1px solid #1c1f22; border-radius: 17px; background: #212529; }
.modal-head { display: flex; align-items: center; justify-content: space-between; height: 62px; padding: 0 16px 2px; border-bottom: 1px solid #8fd3ee; }
h2 { margin: 0; font-size: 20px; font-weight: 400; color: #fff; }
.modal-body { display: flex; flex-direction: column; height: 297px; padding: 40px 16px 0; border-bottom: 1px solid #8fd3ee; }
label { height: 24px; margin-bottom: 4px; font-weight: bold; color: #8fd3ee; }
.field { display: flex; align-items: center; justify-content: space-between; height: 44px; margin-bottom: 8px; padding: 0 10px 0 9px; border-radius: 8px; background: #2a2e37; color: #909193; }
.modal-foot { display: flex; justify-content: space-between; padding: 40px 28px; color: #8fd3ee; }
```
